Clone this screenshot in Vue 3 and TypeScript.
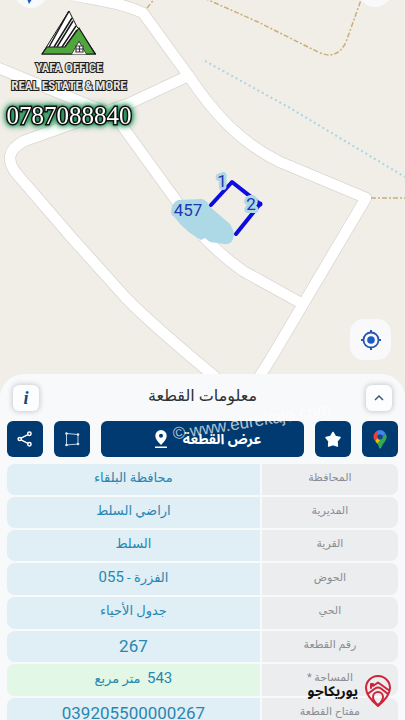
<script setup lang="ts">
interface Row {
  label: string
  value: string
  highlight?: boolean
  numeric?: boolean
}

const rows: Row[] = [
  { label: 'المحافظة', value: 'محافظة البلقاء' },
  { label: 'المديرية', value: 'اراضي السلط' },
  { label: 'القرية', value: 'السلط' },
  { label: 'الحوض', value: 'الفزرة - 055' },
  { label: 'الحي', value: 'جدول الأحياء' },
  { label: 'رقم القطعة', value: '267', numeric: true },
  { label: 'المساحة *', value: '543 \u00a0متر مربع', highlight: true },
  { label: 'مفتاح القطعة', value: '039205500000267', numeric: true },
]

// Splits a value so that its digits can be set larger than the words.
const parts = (value: string): string[] => value.split(/(\d+)/).filter(Boolean)
const isNumber = (part: string): boolean => /^\d+$/.test(part)

const ringRoad = 'M72 -5 C95 0 120 2 143 13 L188 75 C214 114 241 143 280 162 L366 198 L270 360 L256 382'
const westRoad = 'M188 76 L128 104 L24 141 C7 150 7 161 16 173 L72 238 L126 298 Q150 323 220 381'
const middleRoad = 'M-4 67 L115 116 L178 203 Q200 240 243 271 L299 302'
</script>

<template>
  <div class="page" dir="rtl">
    <section class="map">
      <svg class="tiles" viewBox="0 0 405 394" preserveAspectRatio="xMidYMin slice">
        <rect width="405" height="394" fill="#f1eee8" />
        <g fill="none" stroke="#d9d6d2" stroke-width="12" stroke-linejoin="round">
          <path :d="westRoad" /><path :d="middleRoad" /><path :d="ringRoad" />
        </g>
        <g fill="none" stroke="#ffffff" stroke-width="10.5" stroke-linejoin="round">
          <path :d="westRoad" /><path :d="middleRoad" /><path :d="ringRoad" />
        </g>
        <g fill="none" stroke="#c9ae78" stroke-width="1.5" stroke-dasharray="5 2 2 2">
          <path d="M147 8 L156 -3" />
          <path d="M204 -2 L258 22 L300 43 L318 52 Q337 61 346 42 L361 0" />
          <path d="M371 198 H405" />
        </g>
        <path d="M205 61 L290 108 L405 177" fill="none" stroke="#a6d6e4" stroke-width="2" stroke-dasharray="2 3" />
        <path d="M171 213 Q171 203 178 200 L202 199 Q207 200 210 207 L230 224 Q236 234 233 239 Q231 245 224 244 L210 242 L205 238 L201 240 L190 233 L181 225 Z" fill="#add8e6" />
        <path d="M211 205 L232 182 L260 204 L236 234" fill="none" stroke="#0d0de0" stroke-width="4" stroke-linejoin="round" stroke-linecap="round" />
        <circle cx="260" cy="204" r="2.500" fill="#0d0de0" />
        <g class="parcel-label">
          <text x="188" y="216">457</text>
          <text x="222" y="187">1</text>
          <text x="251" y="210">2</text>
        </g>
        <circle cx="31" cy="-9" r="17" fill="#f8f9fb" />
        <circle cx="375" cy="-10" r="17" fill="#f8f9fb" />
        <path d="M26 -4 L34 -4 L29 4 Z" fill="#1c5bb8" />
      </svg>

      <div class="agency" dir="ltr">
        <svg class="agency-mark" viewBox="0 0 56 46" width="56" height="46">
          <path d="M1 44 L28 1 L36 17 L38 19 L54 43 L55 44 Z" fill="#fff" stroke="#181818" stroke-width="1" />
          <path d="M8 37 L28 1 M13 37 L31 8 M16 37 L32 11 M21 37 L35 16 M24 37 L36 20" stroke="#181818" stroke-width="1.500" fill="none" />
          <path d="M1 44 L6 37 H24 L38 18 L54 44 H45 L38 32 L31 44 Z" fill="#4ea63c" stroke="#181818" stroke-width="1.2" />
          <path d="M31 44 L38 32 L45 44 Z" fill="#f3f0ea" />
          <path d="M35 36 h7 v6 h-7 Z M38.500 36 v6 M35 39 h7" stroke="#463048" stroke-width="1.2" fill="#fff" />
        </svg>
        <p class="agency-name">YAFA OFFICE<br />REAL ESTATE &amp; MORE</p>
        <p class="agency-phone">0787088840</p>
      </div>

      <button class="locate" type="button" aria-label="موقعي">
        <svg viewBox="0 0 22 22" width="22" height="22" fill="none" stroke="#2458ae" stroke-width="1.8">
          <circle cx="11" cy="11" r="7.500" />
          <circle cx="11" cy="11" r="3.800" fill="#1c5bc4" stroke="none" />
          <path d="M11 1 V4 M11 18 V21 M1 11 H4 M18 11 H21" stroke-width="2" />
        </svg>
      </button>
    </section>

    <main class="panel">
      <header class="head">
        <button class="mini" type="button" aria-label="طي">
          <svg viewBox="0 0 10 8" width="10" height="8" fill="none" stroke="#3e5878" stroke-width="1.5"><path d="M1 6 L5 2 L9 6" /></svg>
        </button>
        <h1>معلومات القطعة</h1>
        <button class="mini info" type="button">i</button>
      </header>

      <div class="actions">
        <button class="square" type="button" aria-label="خرائط">
          <svg viewBox="0 0 14 19" width="14" height="19">
            <path d="M1 4.500 A7 7 0 0 1 4.500 .6 L8 5 L4 9.500 Z" fill="#e94335" />
            <path d="M4.500 .6 A7 7 0 0 1 12.500 3.200 L7 9.200 L4.600 5 Z" fill="#4285f4" />
            <path d="M1 4 L5 7 L2.200 11 A7 7 0 0 1 1 4 Z" fill="#e94335" />
            <path d="M5 7 L9 9 L4.500 14 L2.200 11 Z" fill="#fbbc04" />
            <path d="M12.500 3.200 Q15 7.500 12 11.500 Q9.500 14 8 18 Q7 19 6.200 18 Q5.500 15 4.300 13.500 Z" fill="#34a853" />
            <circle cx="7" cy="7" r="2.700" fill="#174a80" />
          </svg>
        </button>
        <button class="square" type="button" aria-label="المفضلة">
          <svg viewBox="0 0 18 18" width="18" height="18"><path d="M9 2.500 L11.300 6.400 L16 7.500 L13 11.300 L13.400 16 L9 14.600 L4.600 16 L5 11.300 L2 7.500 L6.700 6.400 Z" fill="#fff" stroke="#fff" stroke-width="1.500" stroke-linejoin="round" /></svg>
        </button>
        <button class="show" type="button">
          <span>عرض القطعة</span>
          <svg viewBox="0 0 14 20" width="14" height="20"><path d="M7 1 A5.700 5.700 0 0 1 12.700 6.700 Q12.700 10.500 7 16 Q1.300 10.500 1.300 6.700 A5.700 5.700 0 0 1 7 1 Z M7 4.800 A2 2 0 1 0 7 8.800 A2 2 0 1 0 7 4.800 Z M1 17.500 H13 V19 H1 Z" fill="#fff" fill-rule="evenodd" /></svg>
        </button>
        <button class="square" type="button" aria-label="حدود">
          <svg viewBox="0 0 16 16" width="16" height="16" fill="none" stroke="#b9cfe4"><path d="M2.500 2.500 L14 3.500 V13 L2.500 14 Z" /><g fill="#dce8f3" stroke="none"><circle cx="2.500" cy="2.500" r="1.300" /><circle cx="14" cy="3.500" r="1.300" /><circle cx="14" cy="13" r="1.300" /><circle cx="2.500" cy="14" r="1.300" /></g></svg>
        </button>
        <button class="square" type="button" aria-label="مشاركة">
          <svg viewBox="0 0 16 16" width="16" height="16" fill="none" stroke="#fff" stroke-width="1.500"><path d="M4 7.200 L11 3.600 M4 8.800 L11 12.400" /><circle cx="2.700" cy="8" r="1.600" /><circle cx="12.400" cy="2.800" r="1.700" /><circle cx="12.400" cy="13.200" r="1.700" /></svg>
        </button>
      </div>

      <table class="details">
        <tbody>
          <tr v-for="row in rows" :key="row.label" :class="{ highlight: row.highlight }">
            <th scope="row">{{ row.label }}</th>
            <td :class="{ numeric: row.numeric }"><span v-for="(part, i) in parts(row.value)" :key="i" :class="{ digits: isNumber(part) }">{{ part }}</span></td>
          </tr>
        </tbody>
      </table>
    </main>

    <div class="watermark" dir="ltr">© www.eurekajo.com</div>
    <div class="brand">
      <svg viewBox="0 0 28 34" width="28" height="34" fill="none" stroke="#cf2338" stroke-width="2" stroke-linejoin="round" stroke-linecap="round">
        <path d="M14 32 Q2 22 2 14 A12 12 0 0 1 26 14 Q26 22 14 32 Z" />
        <path d="M7 14 V10 H9 V12 L14 8.500 L24.500 16" />
        <path d="M3.500 20 L11 14.500 Q14 12.500 17 14.500 L24 20" />
        <path d="M14 31 Q9 27 9 23 A5 5 0 0 1 19 23 Q19 27 14 31 Z" />
      </svg>
      <span>يوريكاجو</span>
    </div>
  </div>
</template>

<style>
body {
  background: #f8f9fb;
}
</style>

<style scoped>
.page {
  position: relative;
  height: 100vh;
  overflow: hidden;
  font-family: Roboto, "DejaVu Sans", sans-serif;
}

.map {
  position: relative;
  aspect-ratio: 405 / 394;
}

.tiles {
  display: block;
  width: 100%;
  height: 100%;
}

.parcel-label {
  font-size: 17px;
  text-anchor: middle;
  direction: ltr;
  fill: #2038b0;
  stroke: #add8e6;
  stroke-width: 6px;
  stroke-linejoin: round;
  paint-order: stroke;
}

.agency {
  position: absolute;
  top: 10px;
  left: 4px;
  display: flex;
  flex-direction: column;
  align-items: center;
  width: 130px;
}

.agency p {
  margin: 0;
  color: #fff;
  white-space: nowrap;
  -webkit-text-stroke: 2px #1c1c1c;
  paint-order: stroke;
}

.agency .agency-name {
  color: #e4e1dc;
  font: 700 13px/18px "Liberation Sans Narrow", "Roboto Condensed", Roboto, sans-serif;
  text-align: center;
  margin-top: 3px;
}

.agency .agency-phone {
  margin-top: 6px;
  font: 25px/30px "Liberation Serif", serif;
  -webkit-text-stroke: 3px #111;
  filter: drop-shadow(0 0 2px #1c8a50) drop-shadow(0 0 3px #27995c);
}

button {
  display: flex;
  align-items: center;
  justify-content: center;
  padding: 0;
  border: 0;
  font-family: inherit;
}

.locate {
  position: absolute;
  right: 14px;
  bottom: 34px;
  width: 41px;
  height: 41px;
  border-radius: 14px;
  background: #f9f9fb;
}

.panel {
  position: relative;
  margin-top: -20px;
  border-radius: 24px 24px 0 0;
  background: #f8f9fb;
}

.head {
  display: flex;
  align-items: center;
  justify-content: space-between;
  height: 47px;
  padding: 0 13px;
}

.head h1 {
  margin: 0;
  padding-bottom: 4px;
  color: #2d3035;
  font-size: 16px;
  font-weight: 400;
  line-height: 24px;
}

.mini {
  width: 26px;
  height: 26px;
  border-radius: 6px;
  background: #fcfdfe;
  box-shadow: 0 0 5px 1px #c9cbce;
}

.info {
  color: #174574;
  font: italic 700 18px/20px "Liberation Serif", serif;
}

.actions {
  display: flex;
  gap: 11px;
  padding: 0 7px;
}

.square,
.show {
  height: 36px;
  border-radius: 6px;
  background: #003a70;
}

.square {
  flex: 0 0 36px;
}

.show {
  flex: 1;
  gap: 15px;
  padding-left: 10px;
  color: #fff;
  font-family: Roboto, "Noto Sans Arabic", sans-serif;
  font-size: 14px;
  font-weight: 700;
}

.details {
  width: calc(100% - 10px);
  height: 269px;
  margin: 5px 5px 0;
  border-collapse: separate;
  border-spacing: 2px;
  table-layout: fixed;
}

.details th,
.details td {
  padding: 0 0 3px;
  text-align: center;
  line-height: 20px;
}

.details th {
  width: 35%;
  border-radius: 0 8px 8px 0;
  background: #ecedef;
  color: #8b8e92;
  font-size: 11px;
  font-weight: 400;
}

.details td {
  border-radius: 8px 0 0 8px;
  background: #e0eef6;
  color: #2887b0;
  font-size: 13px;
}

.details .digits {
  font-size: 15px;
}

.details .numeric,
.details .numeric .digits {
  padding-bottom: 0;
  font-size: 17px;
}

.details .highlight td {
  background: #e2f7e5;
}

.watermark {
  position: absolute;
  top: 411px;
  left: 172px;
  color: rgba(255, 255, 255, 0.7);
  font: 17px/22px "Liberation Sans", sans-serif;
  transform: rotate(-9deg);
  pointer-events: none;
}

.brand {
  position: absolute;
  right: 13px;
  bottom: 12px;
  display: flex;
  align-items: center;
  gap: 6px;
  color: #111;
  font-family: Roboto, "Noto Sans Arabic", sans-serif;
  font-size: 14px;
  font-weight: 700;
}
</style>
